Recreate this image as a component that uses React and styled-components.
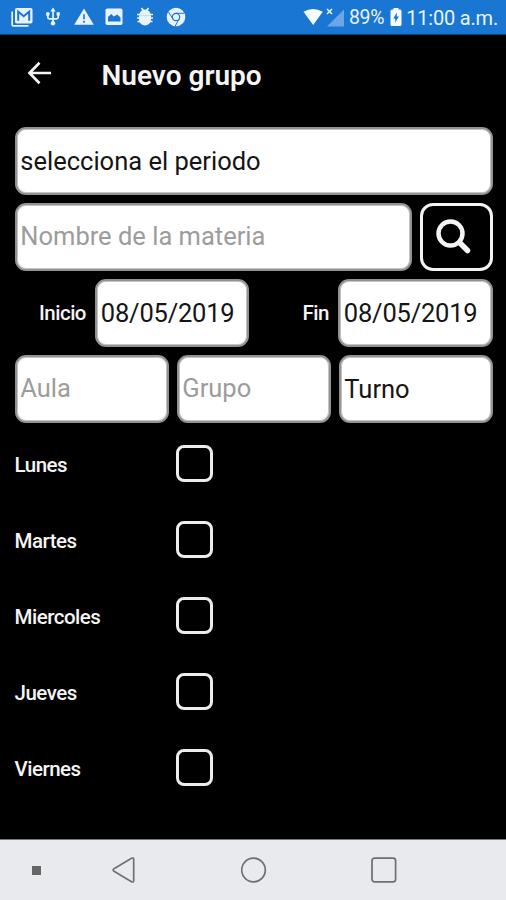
import React, {Component} from 'react';
import styled, {createGlobalStyle} from 'styled-components';


const GlobalStyle = createGlobalStyle`
    * {
        box-sizing:border-box;
    }

    body {
        margin:0;
        background:#000;
        font-family:Roboto, sans-serif;
    }
`;

const Screen = styled.div`
    width:506px;
    height:900px;
    display:flex;
    flex-direction:column;
    background:#000;
    color:#f4f4f4;
    overflow:hidden;
`;

const StatusBar = styled.div`
    height:35px;
    flex:none;
    display:flex;
    align-items:center;
    justify-content:space-between;
    padding:0 8px 0 11px;
    background:#1976d2;
    border-bottom:1px solid #0d4176;
    color:#e9f3fd;
`;

const Notifications = styled.div`
    display:flex;
    gap:8.8px;
`;

const Indicators = styled.div`
    display:flex;
    align-items:center;
`;

const StatusText = styled.span`
    font-size:${props => props.$size}px;
    letter-spacing:${props => props.$spacing}px;
    line-height:24px;
    padding-top:2px;
    margin-left:${props => props.$left}px;
    white-space:nowrap;
`;

const Icon = styled.svg`
    display:block;
    flex:none;
    margin-left:${props => props.$left || 0}px;
`;

const Header = styled.header`
    height:92px;
    flex:none;
    display:flex;
    align-items:flex-start;
    padding:22px 0 0 25px;
`;

const BackButton = styled.button`
    width:76.5px;
    padding:0;
    border:0;
    background:none;
    color:#f4f4f4;
    cursor:pointer;
`;

const Title = styled.h1`
    margin:3px 0 0;
    font-size:28px;
    font-weight:600;
    line-height:32px;
`;

const Form = styled.form`
    flex:1;
    display:flex;
    flex-direction:column;
    gap:8px;
    padding:0 13.5px 0 14.5px;
`;

const Row = styled.div`
    height:68px;
    flex:none;
    display:grid;
    grid-template-columns:${props => props.$columns || '1fr'};
    column-gap:8px;
    align-items:center;
`;

const Field = styled.input`
    width:100%;
    min-width:0;
    height:68px;
    padding:0 0 ${props => props.placeholder ? 3 : 1}px 3.8px;
    background:#fff;
    border:2px solid #929292;
    border-radius:11px;
    box-shadow:inset 0 0 0 1px #c4c4c4;
    color:#151515;
    font-family:Roboto, sans-serif;
    font-size:25.5px;
    letter-spacing:${props => props.$spacing || 0}px;
    outline:0;

    &::placeholder {
        color:#9c9c9c;
        opacity:1;
    }
`;

const SearchButton = styled.button`
    width:100%;
    height:68px;
    padding:0;
    display:flex;
    align-items:center;
    justify-content:center;
    background:#000;
    border:3px solid #f4f4f4;
    border-radius:13px;
    color:#f4f4f4;
    cursor:pointer;
`;

const Label = styled.label`
    font-size:20.5px;
    font-weight:500;
    line-height:24px;
    letter-spacing:-0.5px;
    padding-right:${props => props.$align ? 1 : 0}px;
    text-align:${props => props.$align || 'left'};
    white-space:nowrap;
`;

const Checkbox = styled.input`
    appearance:none;
    width:37px;
    height:37px;
    margin:0 0 3px -0.5px;
    background:#000;
    border:3px solid #ededed;
    border-radius:8px;
`;

const NavBar = styled.nav`
    height:61px;
    flex:none;
    display:flex;
    align-items:center;
    padding-left:32px;
    background:#e8eaed;
    border-top:1px solid #777;
`;

const NavButton = styled.button`
    padding:0;
    border:0;
    background:none;
    margin-right:${props => props.$gap || 0}px;
    cursor:pointer;
`;

const days = ['Lunes', 'Martes', 'Miercoles', 'Jueves', 'Viernes'];

const GmailIcon = () => (
    <Icon width="22" height="22" viewBox="0 0 22 22">
        <path d="M1.2 5.5v13.3q0 1 1 1H17.5" fill="none" stroke="#e9f3fd" strokeWidth="1.7" />
        <rect x="4" y="2" width="17.5" height="15.5" rx="1.8" fill="#e9f3fd" />
        <path d="M7.2 14.8V5.6l5.5 4.6 5.5-4.6v9.2" fill="none" stroke="#1976d2" strokeWidth="2" />
    </Icon>
);

const UsbIcon = () => (
    <Icon width="22" height="22" viewBox="0 0 22 22" fill="none" stroke="#e9f3fd" strokeWidth="1.7">
        <path d="M11 4v12M5.8 8v3.2q0 1.6 1.6 1.6h7.2q1.6 0 1.6-1.6V8" />
        <path d="M11 1.5l2.7 4H8.3zM14.6 6.3h3.2v3.2h-3.2z" fill="#e9f3fd" stroke="none" />
        <circle cx="5.8" cy="8" r="1.9" fill="#e9f3fd" stroke="none" />
        <circle cx="11" cy="17.3" r="2.2" fill="#e9f3fd" stroke="none" />
    </Icon>
);

const WarningIcon = () => (
    <Icon width="22" height="22" viewBox="0 0 22 22">
        <path d="M11 2.5L20.8 18.7H1.2z" fill="#e9f3fd" />
        <path d="M11 8.3v5M11 14.7v2" stroke="#1976d2" strokeWidth="1.6" />
    </Icon>
);

const PictureIcon = () => (
    <Icon width="22" height="22" viewBox="0 0 22 22">
        <rect x="2.5" y="2.5" width="17" height="16.5" rx="1.8" fill="#e9f3fd" />
        <path d="M5 15.5V11l3.2-3 2.6 2.5 3.5-2 3.2 3v4z" fill="#1976d2" />
    </Icon>
);

const BugIcon = () => (
    <Icon width="22" height="22" viewBox="0 0 22 22">
        <path
            d="M7.5 2l2 2.8M14.5 2l-2 2.8M3 8.5h16M3 12h16M3.5 15.5h15"
            stroke="#e9f3fd"
            strokeWidth="1.7"
        />
        <path d="M5.5 8.2a5.5 4.7 0 0 1 11 0zM5 9.3h12v4.3a6 6 0 0 1-12 0z" fill="#e9f3fd" />
    </Icon>
);

const ChromeIcon = () => (
    <Icon width="22" height="22" viewBox="0 0 22 22">
        <circle cx="11" cy="11" r="9.3" fill="#e9f3fd" />
        <circle cx="11" cy="11" r="3.7" fill="none" stroke="#1976d2" strokeWidth="1.2" />
        <path d="M11 7.3h8.3M7.8 12.8L3.6 6M14.2 12.9L10.2 20" stroke="#1976d2" strokeWidth="1" />
    </Icon>
);

class App extends Component {

    /* The form is never sent */
    handleSubmit(e){
        e.preventDefault();
    }

    render() {
        return (
            <Screen>
                <GlobalStyle />
                <StatusBar>
                    <Notifications>
                        <GmailIcon />
                        <UsbIcon />
                        <WarningIcon />
                        <PictureIcon />
                        <BugIcon />
                        <ChromeIcon />
                    </Notifications>
                    <Indicators>
                        <Icon width="43" height="22" viewBox="0 0 43 22">
                            <path d="M.5 5.8Q10 0 19.8 5.8L10.2 19z" fill="#f7fbff" />
                            <path d="M41 3.5V20.5H24z" fill="#6ba7e5" />
                            <path d="M24 3l5 5M29 3l-5 5" stroke="#e9f3fd" strokeWidth="1.5" />
                        </Icon>
                        <StatusText $size={19.5} $spacing={-0.3} $left={2.5}>89%</StatusText>
                        <Icon $left={6} width="12" height="20" viewBox="0 0 12 20">
                            <path d="M3.5 1h5v1.5H10q1.5 0 1.5 1.5v13.5q0 1.5-1.5 1.5H2Q.5 19 .5 17.5V4Q.5 2.5 2 2.5h1.5z" fill="#f7fbff" />
                            <path d="M6.8 5.5L3.3 11.5h2v4l3.5-6H6.8z" fill="#1976d2" />
                        </Icon>
                        <StatusText $size={20} $spacing={-0.2} $left={4}>11:00 a.m.</StatusText>
                    </Indicators>
                </StatusBar>
                <Header>
                    <BackButton type="button" aria-label="Atrás">
                        <Icon width="30" height="32" viewBox="0 0 30 32" fill="none" stroke="currentColor" strokeWidth="2.7">
                            <path d="M26 16H5M14.5 5.7L4.5 16l10 10.3" />
                        </Icon>
                    </BackButton>
                    <Title>Nuevo grupo</Title>
                </Header>
                <Form onSubmit={(e)=>this.handleSubmit(e)}>
                    <Row>
                        <Field defaultValue="selecciona el periodo" />
                    </Row>
                    <Row $columns="397px 1fr">
                        <Field placeholder="Nombre de la materia" />
                        <SearchButton type="button" aria-label="Buscar">
                            <Icon width="40" height="40" viewBox="0 0 40 40" fill="none" stroke="currentColor">
                                <circle cx="14.5" cy="16.5" r="12" strokeWidth="4.5" />
                                <path d="M23.5 25.5l8 8" strokeWidth="5.5" strokeLinecap="round" />
                            </Icon>
                        </SearchButton>
                    </Row>
                    <Row $columns="72.5px 154px 73px 1fr">
                        <Label $align="right">Inicio</Label>
                        <Field $spacing={-0.2} defaultValue="08/05/2019" />
                        <Label $align="right">Fin</Label>
                        <Field $spacing={-0.2} defaultValue="08/05/2019" />
                    </Row>
                    <Row $columns="repeat(3, 1fr)">
                        <Field placeholder="Aula" />
                        <Field placeholder="Grupo" />
                        <Field defaultValue="Turno" />
                    </Row>
                    {days.map(day => (
                        <Row key={day} $columns="154px 1fr">
                            <Label htmlFor={day}>{day}</Label>
                            <Checkbox type="checkbox" id={day} />
                        </Row>
                    ))}
                </Form>
                <NavBar>
                    <NavButton type="button" aria-label="Ocultar" $gap={70}>
                        <Icon width="9" height="9"><rect width="9" height="9" fill="#666" /></Icon>
                    </NavButton>
                    <NavButton type="button" aria-label="Volver" $gap={104}>
                        <Icon width="26" height="28" viewBox="0 0 26 28">
                            <path d="M3 12.8L20.5 2.3q2.2-1 2.2 1.2v21q0 2.2-2.2 1.2L3 15.2q-1.8-1.2 0-2.4z" fill="none" stroke="#707070" strokeWidth="1.7" />
                        </Icon>
                    </NavButton>
                    <NavButton type="button" aria-label="Inicio" $gap={101.5}>
                        <Icon width="28" height="28">
                            <circle cx="12.5" cy="14" r="11.8" fill="none" stroke="#707070" strokeWidth="1.7" />
                        </Icon>
                    </NavButton>
                    <NavButton type="button" aria-label="Recientes">
                        <Icon width="28" height="28">
                            <rect x="1" y="2.2" width="23.6" height="23.6" rx="2.5" fill="none" stroke="#707070" strokeWidth="1.7" />
                        </Icon>
                    </NavButton>
                </NavBar>
            </Screen>
        );
    }
}

export default App;
